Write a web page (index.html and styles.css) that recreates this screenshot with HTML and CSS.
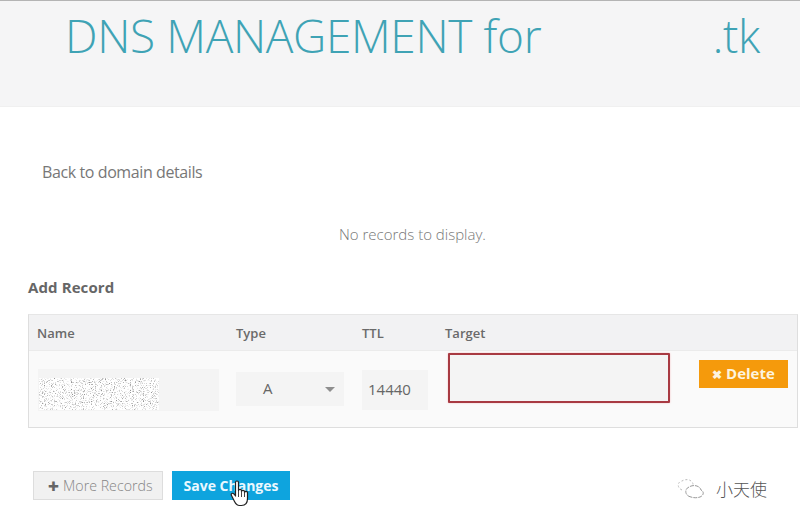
FILE: index.html
```html
<!DOCTYPE html>
<html lang="en">
<head>
<meta charset="utf-8">
<title>DNS Management</title>
<link rel="stylesheet" href="styles.css">
</head>
<body>
<header class="banner">
  <h1 class="title"><span>DNS MANAGEMENT for</span><span>.tk</span></h1>
</header>
<main class="content">
  <a class="back">Back to domain details</a>
  <p class="empty">No records to display.</p>
  <h2 class="add">Add Record</h2>
  <section class="records">
    <div class="row head">
      <div class="c-name">Name</div>
      <div class="c-type">Type</div>
      <div class="c-ttl">TTL</div>
      <div class="c-target">Target</div>
    </div>
    <div class="row body">
      <div class="c-name">
        <div class="field name-field">
          <svg class="noise" width="120" height="32" viewBox="0 0 120 32">
            <filter id="speckle" x="0" y="0" width="100%" height="100%">
              <feTurbulence type="fractalNoise" baseFrequency="0.9" numOctaves="2" seed="7"/>
              <feColorMatrix values="0 0 0 0 0.3  0 0 0 0 0.3  0 0 0 0 0.3  2.6 2.6 0 0 -2.7"/>
            </filter>
            <rect width="120" height="32" fill="#fff"/>
            <rect width="120" height="32" filter="url(#speckle)"/>
          </svg>
        </div>
      </div>
      <div class="c-type">
        <div class="field type-field"><span>A</span><i class="caret"></i></div>
      </div>
      <div class="c-ttl"><div class="field ttl-field">14440</div></div>
      <div class="c-target"><div class="field target-field"></div></div>
      <div class="c-action"><button class="btn delete"><span class="x">✖</span> Delete</button></div>
    </div>
  </section>
  <div class="actions">
    <button class="btn more"><span class="plus">✚</span> More Records</button>
    <button class="btn save">Save Changes</button>
    <svg class="cursor" width="20" height="28" viewBox="0 0 20 28">
      <path d="M5.5 2.5c0-2 3-2 3 0v8c0-1.600 3-1.600 3 0v1c0-1.500 3-1.500 3 0v1c0-1.400 3-1.400 3 0v6c0 4-2 7-6 7h-2c-3 0-4-2-5-4l-3-6c-1-2 1-3 2.500-1.500l1.500 2z" fill="#fff" stroke="#222" stroke-width="1.200" stroke-linejoin="round"/>
      <path d="M8.500 11v6M11.500 11.500v5.500M14.500 12.500v4.500" fill="none" stroke="#444"/>
    </svg>
  </div>
</main>
<footer class="mark">
  <svg class="mark-icon" width="34" height="24" viewBox="0 0 34 24">
    <path d="M6 13C1 11 1 5 6 4c3-2 8-2 10 1 1 1 1 2 1 3" fill="none" stroke="#bbb" stroke-dasharray="2 2"/>
    <path d="M15 20c-6-1-7-8-2-10 5-3 11-1 12 3 4 2 2 6-1 7-3 1-6 1-9 0z" fill="none" stroke="#999" stroke-dasharray="4 1"/>
  </svg>
  <span>小天使</span>
</footer>
</body>
</html>
```
FILE: styles.css
```css
* { box-sizing: border-box; }
html, body { margin: 0; padding: 0; }
body {
  width: 800px;
  height: 524px;
  overflow: hidden;
  position: relative;
  background: #fff;
  color: #666;
  font-family: "Open Sans", "Liberation Sans", sans-serif;
}
.banner {
  height: 107px;
  padding: 7px 40px 0 65px;
  background: #f5f5f6;
  border-top: 1px solid #b4b4b4;
  border-bottom: 1px solid #f0f0f0;
}
.title {
  margin: 0;
  display: flex;
  justify-content: space-between;
  font-size: 46px;
  line-height: 54px;
  font-weight: 300;
  letter-spacing: -0.35px;
  color: #3fa3b5;
}
.content { padding: 0 11px 0 28px; }
.back {
  display: block;
  margin: 55px 0 0 14px;
  font-size: 16px;
  line-height: 20px;
  letter-spacing: -0.4px;
  color: #777;
}
.empty {
  margin: 42px 0 0 311px;
  font-size: 15px;
  line-height: 20px;
  font-weight: 300;
  color: #777;
}
.add {
  margin: 33px 0 0;
  font-size: 15px;
  line-height: 20px;
  font-weight: 700;
  letter-spacing: 0.1px;
  color: #666;
}
.records {
  margin-top: 17px;
  width: 770px;
  height: 114px;
  border: 1px solid #dedede;
  border-top-color: #e6e6e6;
  background: #fafafa;
}
.row { display: grid; grid-template-columns: 198px 127px 82px 250px 1fr; }
.head {
  height: 36px;
  background: #f2f2f3;
  border-bottom: 1px solid #ebebeb;
  align-items: center;
  font-size: 13px;
  font-weight: 600;
  color: #6a6a6a;
}
.head .c-name { padding-left: 8px; }
.head .c-type { padding-left: 9px; }
.head .c-ttl { padding-left: 8px; }
.head .c-target { padding-left: 9px; }
.body { height: 76px; position: relative; }
.field { background: #f4f4f4; }
.c-name .name-field {
  margin: 18px 0 0 9px;
  width: 181px;
  height: 42px;
  padding: 9px 0 0 1px;
}
.noise { display: block; }
.type-field {
  margin: 21px 0 0 9px;
  width: 108px;
  height: 34px;
  display: flex;
  justify-content: space-between;
  align-items: center;
  padding: 0 9px 2px 25px;
  font-size: 15px;
  color: #666;
}
.type-field span { margin-left: 2px; }
.caret {
  width: 0;
  height: 0;
  margin-top: 2px;
  border-left: 5px solid transparent;
  border-right: 5px solid transparent;
  border-top: 5px solid #8e8e8e;
}
.ttl-field {
  margin: 19px 0 0 8px;
  width: 66px;
  height: 40px;
  padding-left: 6px;
  font-size: 15px;
  line-height: 38px;
  color: #666;
}
.target-field {
  margin: 2px 0 0 12px;
  width: 222px;
  height: 50px;
  border: 2px solid #a83a42;
  box-shadow: 0 0 2px #f3b8bc;
  border-radius: 1px;
}
.btn {
  border: 0;
  font-family: inherit;
  padding: 0;
  display: block;
}
.delete {
  margin: 9px 0 0 13px;
  width: 89px;
  height: 28px;
  padding-bottom: 2px;
  background: #f59a0c;
  color: #fdf3df;
  font-size: 15px;
  font-weight: 700;
}
.x { font-size: 12px; }
.actions {
  display: flex;
  margin: 43px 0 0 5px;
  gap: 9px;
  position: relative;
}
.more {
  width: 130px;
  height: 29px;
  padding-left: 5px;
  background: #f1f1f1;
  border: 1px solid #dddddd;
  color: #858585;
  font-size: 14.2px;
  font-weight: 300;
}
.plus { color: #666; font-size: 13px; }
.save {
  width: 118px;
  height: 29px;
  background: #0ea4de;
  color: #eaf8fe;
  font-size: 14px;
  font-weight: 700;
}
.cursor { position: absolute; left: 197px; top: 9px; }
.mark {
  position: absolute;
  left: 676px;
  top: 476px;
  display: flex;
  align-items: center;
  gap: 6px;
  font-family: "Noto Sans CJK SC", sans-serif;
  font-size: 17px;
  font-weight: 300;
  color: #555;
}
```
